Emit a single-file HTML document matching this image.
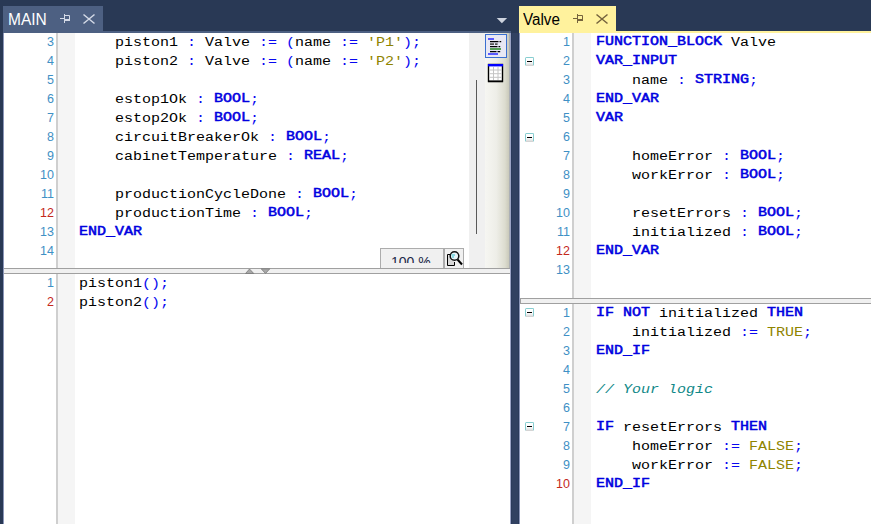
<!DOCTYPE html>
<html><head><meta charset="utf-8"><title>IDE</title>
<style>
html,body{margin:0;padding:0;}
body{width:871px;height:524px;overflow:hidden;background:#293955;position:relative;font-family:"Liberation Sans",sans-serif;}
.abs{position:absolute;}
.tab{position:absolute;top:6px;height:25px;font-size:15px;line-height:25px;white-space:nowrap;}
.tt{position:absolute;top:1px;font-size:16px;transform:scaleX(.93);transform-origin:0 50%;}
.pane{position:absolute;background:#fff;overflow:hidden;}
.gl{position:absolute;top:0;bottom:0;width:2px;background:#cfcfcf;}
.gs{position:absolute;top:0;bottom:0;width:17px;background:#f5f5f5;}
.ln{position:absolute;left:0;width:50px;text-align:right;font-size:12.5px;line-height:19px;color:#3f90c5;white-space:pre;}
.ln .r{color:#c4281c;}
.code{position:absolute;font-family:"Liberation Mono",monospace;font-size:12px;line-height:19px;white-space:pre;color:#000;transform:scaleX(1.25);transform-origin:0 0;}
.k{color:#0000e0;-webkit-text-stroke:0.5px #0000e0;position:relative;top:-1px;}
.o{color:#0808f0;}
.s{color:#8f8400;}
.c{color:#108888;font-style:italic;}
.split{position:absolute;height:4px;background:#f0f0f0;border-top:1px solid #a0a0a0;border-bottom:1px solid #a0a0a0;}
.fold{position:absolute;width:7px;height:7px;border:1px solid #86cdd0;border-bottom-color:#d4d4d4;background:linear-gradient(#fff 55%,#dcdcdc);border-radius:1.5px;}
.fold:after{content:"";position:absolute;left:1px;top:3px;width:5px;height:1px;background:#000;}
</style></head><body>

<!-- left tab -->
<div class="tab" style="left:3px;width:100px;background:#4d6082;color:#fff;"><span class="tt" style="left:5px;transform:scaleX(.97);">MAIN</span>
<svg class="abs" style="left:55px;top:6px;" width="40" height="14" viewBox="0 0 40 14"><g fill="none" stroke="#d3d9e6"><path d="M2 6.5H6.5M6.5 2V11M7 3.5H11.5V8.5M7 8.5H12" stroke-width="1"/><path d="M7 8H12" stroke-width="2"/><path d="M25.5 2.5L36.5 11.5M36.5 2.5L25.5 11.5" stroke-width="1.5"/></g></svg></div>
<div class="abs" style="left:3px;top:31px;width:508px;height:2px;background:#4d6082;"></div>
<svg class="abs" style="left:496px;top:17px;" width="12" height="7" viewBox="0 0 12 7"><path d="M0.7 1H11.1L5.9 6.2Z" fill="#cdd3de"/></svg>
<!-- right tab -->
<div class="tab" style="left:519px;width:97px;background:#fff29d;color:#000;"><span class="tt" style="left:4px;transform:scaleX(.95);">Valve</span>
<svg class="abs" style="left:52px;top:6px;" width="40" height="14" viewBox="0 0 40 14"><g fill="none" stroke="#75633d"><path d="M2 6.5H6.5M6.5 2V11M7 3.5H11.5V8.5M7 8.5H12" stroke-width="1"/><path d="M7 8H12" stroke-width="2"/><path d="M25.5 2.5L36.5 11.5M36.5 2.5L25.5 11.5" stroke-width="1.5"/></g></svg></div>
<div class="abs" style="left:519px;top:31px;width:352px;height:2px;background:#fff29d;"></div>

<div class="abs" style="left:510px;top:33px;width:1px;height:491px;background:#9aa3c4;z-index:5;"></div>
<div class="abs" style="left:519px;top:33px;width:1px;height:491px;background:#8b96b8;"></div>
<div class="abs" style="left:511px;top:33px;width:8px;height:491px;background:linear-gradient(90deg,#2a3a5b 0,#2a3a5b 1px,#314161 1.5px,#314161 6.5px,#2a3a5b 7px);"></div>
<div class="abs" style="left:3px;top:33px;width:1px;height:491px;background:#8b96b8;"></div>
<!-- left upper pane -->
<div class="pane" style="left:4px;top:33px;width:507px;height:235px;">
  <div class="gl" style="left:52px;"></div><div class="gs" style="left:54px;"></div>
  <div class="ln" style="top:0px;">3
4
5
6
7
8
9
10
11
<span class="r">12</span>
13
14</div>
  <div class="code" style="left:75px;top:1px;">    piston1 <span class="o">:</span> Valve <span class="o">:=</span> <span class="o">(</span>name <span class="o">:=</span> <span class="s">'P1'</span><span class="o">);</span>
    piston2 <span class="o">:</span> Valve <span class="o">:=</span> <span class="o">(</span>name <span class="o">:=</span> <span class="s">'P2'</span><span class="o">);</span>

    estop1Ok <span class="o">:</span> <span class="k">BOOL</span><span class="o">;</span>
    estop2Ok <span class="o">:</span> <span class="k">BOOL</span><span class="o">;</span>
    circuitBreakerOk <span class="o">:</span> <span class="k">BOOL</span><span class="o">;</span>
    cabinetTemperature <span class="o">:</span> <span class="k">REAL</span><span class="o">;</span>

    productionCycleDone <span class="o">:</span> <span class="k">BOOL</span><span class="o">;</span>
    productionTime <span class="o">:</span> <span class="k">BOOL</span><span class="o">;</span>
<span class="k">END_VAR</span>
</div>
  <!-- scrollbar area -->
  <div class="abs" style="left:465px;top:0;width:16px;height:235px;background:#f0f0f0;"></div>
  <div class="abs" style="left:472px;top:47px;width:1px;height:154px;background:#5a5a5a;"></div>
  <!-- toolbar -->
  <div class="abs" style="left:481px;top:0;width:25px;height:235px;background:linear-gradient(90deg,#f6f6f2 0%,#eeeee8 45%,#dcdccf 80%,#c9c9ba 96%,#8e96b0 100%);"></div>
  <svg class="abs" style="left:481px;top:1px;" width="24" height="50" viewBox="0 0 24 50">
    <rect x="0.5" y="0.5" width="21" height="23" fill="#e8e8f4" stroke="#3a6fd0"/>
    <rect x="3" y="4" width="6" height="2" fill="#5a5aff"/>
    <path d="M5 7.6H13.5M14.5 7.6H16.2M5 12.6H12.5M13.5 12.6H15.2M5 17.6H11.5M12.5 17.6H15.2" stroke="#000" stroke-width="1.3" fill="none"/>
    <path d="M5 10.2H9M10 10.2H12.6" stroke="#555" stroke-width="1.8" fill="none"/>
    <rect x="5" y="14" width="11" height="2" fill="#55a055"/>
    <rect x="3" y="19" width="10" height="2" fill="#5a5aff"/>
    <rect x="3.5" y="30.5" width="14" height="17" fill="#fff" stroke="#000" stroke-width="1.4"/>
    <rect x="3" y="30" width="15" height="2.4" fill="#0000ff"/>
    <path d="M4 36H17M4 39.7H17M4 43.3H17M8.5 33V47M13 33V47" stroke="#c4c4c4" stroke-width="1" fill="none"/>
    <path d="M3 47.3H18" stroke="#000" stroke-width="1.6" fill="none"/>
  </svg>
  <!-- zoom box -->
  <div class="abs" style="left:376px;top:215px;width:62px;height:19px;background:#f0f0f0;border:1px solid #acacac;overflow:hidden;"><span style="position:absolute;left:10px;top:6px;height:8px;overflow:hidden;font-size:14px;line-height:15px;color:#1e2a4a;white-space:nowrap;">100 %</span></div>
  <div class="abs" style="left:440px;top:215px;width:18px;height:19px;background:#f0f0f0;border:1px solid #acacac;"></div>
  <svg class="abs" style="left:441px;top:216px;" width="20" height="19" viewBox="0 0 20 19">
    <path d="M2.5 5.5H5.5M2.5 5.5V16.5H9.5V13" fill="#d8d8d8" stroke="#000" stroke-width="1"/>
    <circle cx="9.5" cy="7" r="4.3" fill="#e8f4f8" stroke="#111" stroke-width="1.5"/>
    <path d="M6.5 6H10M7 8H9" stroke="#30c0d0" stroke-width="1" fill="none"/>
    <path d="M12.5 10.5L17 15.5" stroke="#000" stroke-width="2" fill="none"/>
  </svg>
</div>
<div class="split" style="left:4px;top:268px;width:507px;"></div>
<svg class="abs" style="left:244px;top:268px;" width="28" height="6" viewBox="0 0 28 6"><path d="M1.5 5.5L5.5 1L9.8 5.5Z" fill="#a8a8a8" stroke="#787878" stroke-width="0.8"/><path d="M17.2 0.8H25.8L21.5 5.5Z" fill="#a8a8a8" stroke="#787878" stroke-width="0.8"/></svg>
<!-- left lower pane -->
<div class="pane" style="left:4px;top:274px;width:507px;height:250px;">
  <div class="gl" style="left:52px;"></div><div class="gs" style="left:54px;"></div>
  <div class="ln" style="top:0px;">1
<span class="r">2</span></div>
  <div class="code" style="left:75px;top:1px;">piston1<span class="o">();</span>
piston2<span class="o">();</span></div>
</div>

<!-- right upper pane -->
<div class="pane" style="left:520px;top:33px;width:351px;height:265px;">
  <div class="gl" style="left:52px;"></div><div class="gs" style="left:54px;"></div>
  <div class="ln" style="top:0px;">1
2
3
4
5
6
7
8
9
10
11
<span class="r">12</span>
13</div>
  <div class="code" style="left:76px;top:1px;"><span class="k">FUNCTION_BLOCK</span> Valve
<span class="k">VAR_INPUT</span>
    name <span class="o">:</span> <span class="k">STRING</span><span class="o">;</span>
<span class="k">END_VAR</span>
<span class="k">VAR</span>

    homeError <span class="o">:</span> <span class="k">BOOL</span><span class="o">;</span>
    workError <span class="o">:</span> <span class="k">BOOL</span><span class="o">;</span>

    resetErrors <span class="o">:</span> <span class="k">BOOL</span><span class="o">;</span>
    initialized <span class="o">:</span> <span class="k">BOOL</span><span class="o">;</span>
<span class="k">END_VAR</span>
</div>
  <div class="fold" style="left:5px;top:24px;"></div>
  <div class="fold" style="left:5px;top:100px;"></div>
</div>
<div class="split" style="left:520px;top:298px;width:351px;border-left:1px solid #a0a0a0;"></div>
<!-- right lower pane -->
<div class="pane" style="left:520px;top:304px;width:351px;height:220px;">
  <div class="gl" style="left:52px;"></div><div class="gs" style="left:54px;"></div>
  <div class="ln" style="top:0px;">1
2
3
4
5
6
7
8
9
<span class="r">10</span></div>
  <div class="code" style="left:76px;top:1px;"><span class="k">IF NOT</span> initialized <span class="k">THEN</span>
    initialized <span class="o">:=</span> <span class="s">TRUE</span><span class="o">;</span>
<span class="k">END_IF</span>

<span class="c">// Your logic</span>

<span class="k">IF</span> resetErrors <span class="k">THEN</span>
    homeError <span class="o">:=</span> <span class="s">FALSE</span><span class="o">;</span>
    workError <span class="o">:=</span> <span class="s">FALSE</span><span class="o">;</span>
<span class="k">END_IF</span></div>
  <div class="fold" style="left:5px;top:4px;"></div>
  <div class="fold" style="left:5px;top:118px;"></div>
</div>
</body></html>
